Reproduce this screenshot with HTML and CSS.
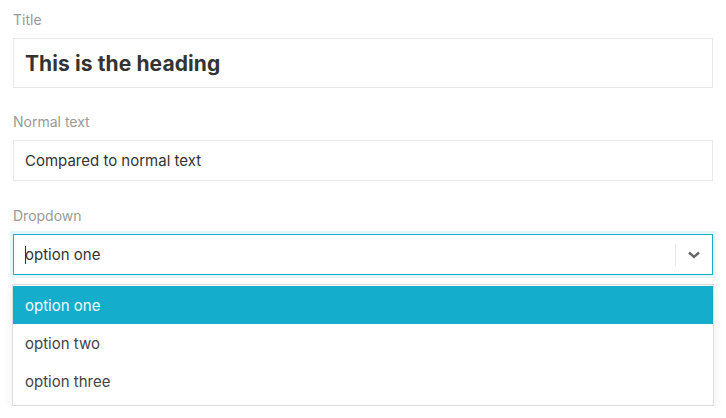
FILE: index.html
```html
<!DOCTYPE html>
<html>
<head>
<meta charset="utf-8">
<link rel="stylesheet" href="styles.css">
</head>
<body>
<div class="form">
  <div class="field">
    <div class="label">Title</div>
    <div class="input input-heading">This is the heading</div>
  </div>
  <div class="field">
    <div class="label">Normal text</div>
    <div class="input input-normal">Compared to normal text</div>
  </div>
  <div class="field field-dropdown">
    <div class="label">Dropdown</div>
    <div class="select">
      <div class="select-value"><span class="caret"></span>option one</div>
      <div class="select-sep"></div>
      <div class="select-arrow">
        <svg width="14" height="10" viewBox="0 0 14 10"><path d="M2 2.5 L7 7 L12 2.5" fill="none" stroke="#666" stroke-width="2.4"/></svg>
      </div>
    </div>
    <div class="menu">
      <div class="option active">option one</div>
      <div class="option">option two</div>
      <div class="option">option three</div>
    </div>
  </div>
</div>
</body>
</html>
```
FILE: styles.css
```css
html, body {
  margin: 0;
  padding: 0;
  background: #fff;
}
body {
  font-family: Inter, "Noto Sans", sans-serif;
  color: #333;
}
.form {
  padding: 11px 13px 0 13px;
  display: flex;
  flex-direction: column;
  gap: 25px;
}
.field {
  display: flex;
  flex-direction: column;
}
.field-dropdown {
  margin-top: 1px;
}
.label {
  font-size: 14px;
  color: #999;
  line-height: 18px;
  margin-bottom: 9px;
}
.input {
  border: 1px solid #e8e8e8;
  box-sizing: border-box;
  padding: 0 11px;
  display: flex;
  align-items: center;
}
.input-heading {
  height: 50px;
  font-size: 21px;
  font-weight: 700;
  color: #333;
  letter-spacing: 0.1px;
}
.input-normal {
  height: 41px;
  font-size: 15px;
  color: #333;
}
.select {
  height: 41px;
  box-sizing: border-box;
  border: 1px solid #15adcc;
  box-shadow: 0 0 0 3px #e5f6fa;
  display: flex;
  align-items: center;
}
.select-value {
  flex: 1;
  padding-left: 11px;
  font-size: 15px;
  color: #333;
  display: flex;
  align-items: center;
}
.caret {
  display: inline-block;
  width: 1px;
  height: 18px;
  background: #333;
  margin-right: -1px;
}
.select-sep {
  width: 1px;
  height: 22px;
  background: #e6e6e6;
}
.select-arrow {
  width: 36px;
  display: flex;
  justify-content: center;
  align-items: center;
  padding-top: 1px;
}
.menu {
  margin: 9px -1px 0 -1px;
  background: #fff;
  border: 1px solid #ddd;
  box-shadow: 0 3px 10px rgba(0,0,0,0.07);
  padding: 1px 0 5px 0;
}
.option {
  height: 38px;
  display: flex;
  align-items: center;
  padding-left: 12px;
  font-size: 15px;
  color: #444;
}
.option.active {
  background: #15adcc;
  color: #f2fbfd;
}
```
